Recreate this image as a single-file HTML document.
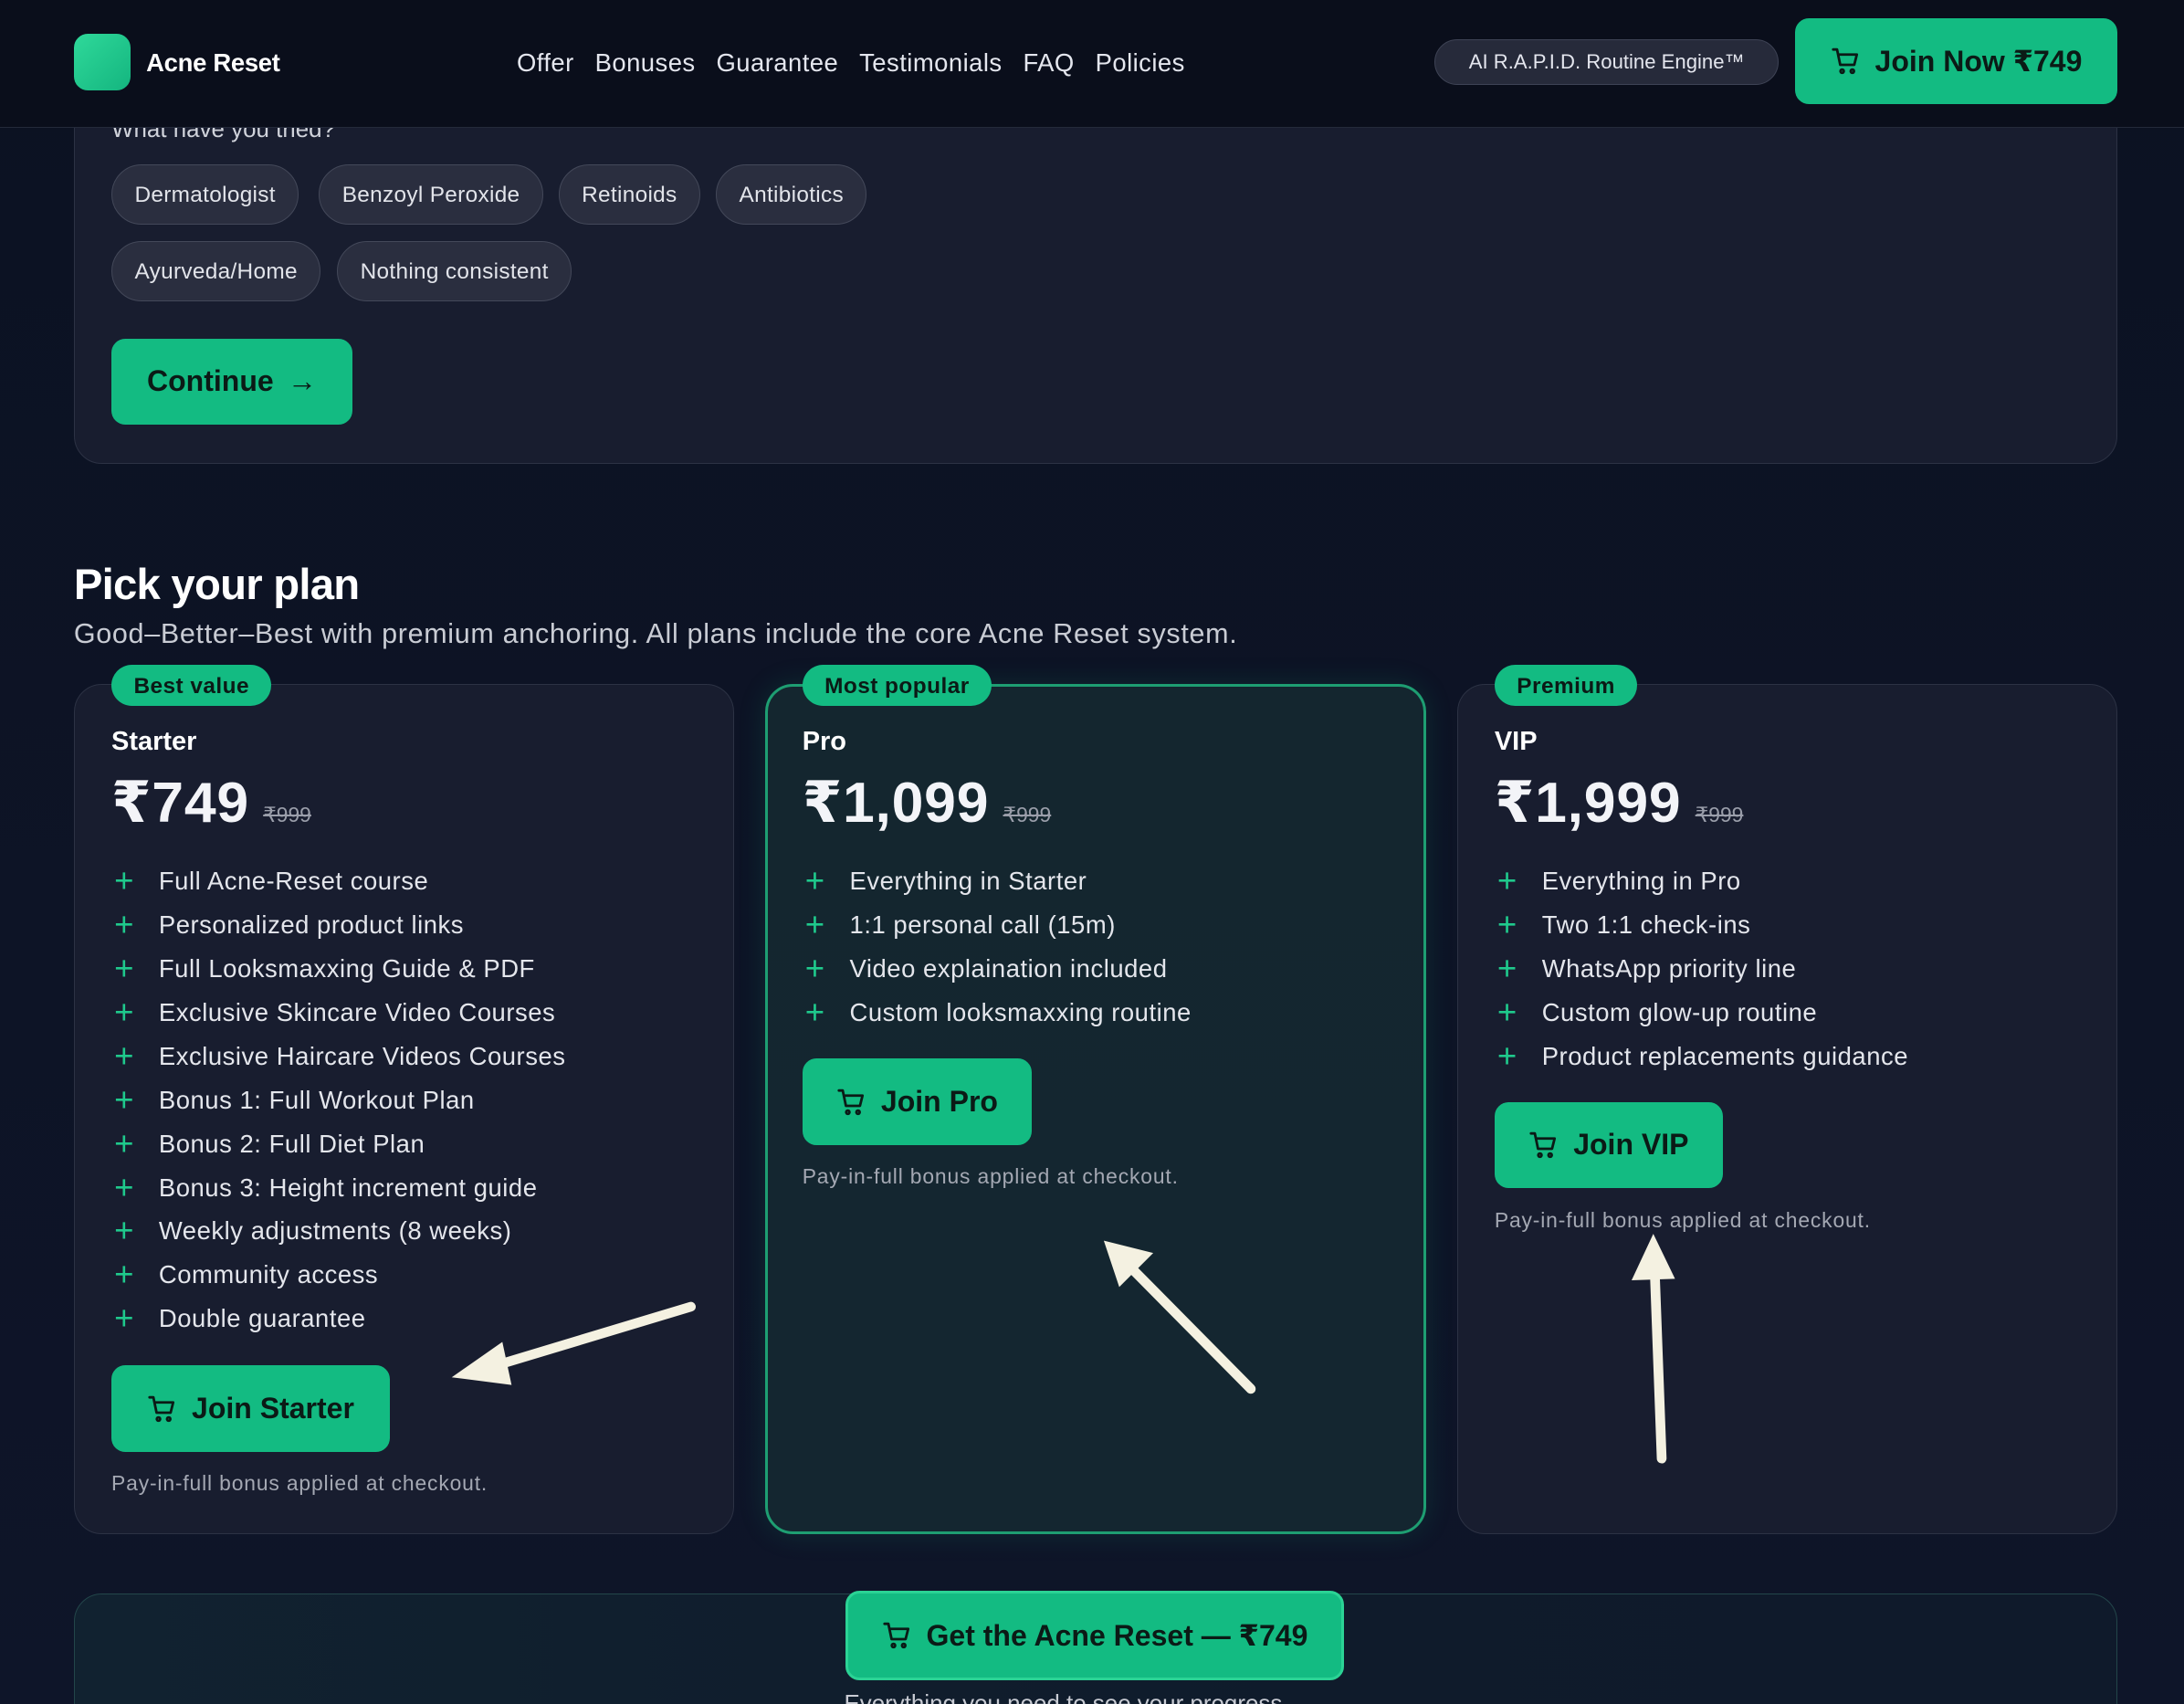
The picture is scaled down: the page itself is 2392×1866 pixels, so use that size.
<!DOCTYPE html>
<html><head><meta charset="utf-8"><style>
*{box-sizing:border-box;margin:0;padding:0}
html,body{width:2392px;height:1866px;overflow:hidden;background:#0d1426}
#r{zoom:1.52551;width:1568px;height:1223px;position:relative;font-family:"Liberation Sans","DejaVu Sans",sans-serif;color:#e8eaf0;background:linear-gradient(#0c1222,#0e1529)}
.abs{position:absolute}
.hdr{left:0;top:0;width:1568px;height:92px;background:#0a0e1b;border-bottom:1px solid #242a3a;z-index:5}
.logo{left:53px;top:24px;width:41px;height:41px;border-radius:10px;background:linear-gradient(135deg,#2fd99a,#14b57f)}
.brand{left:105px;top:35px;font-size:18px;font-weight:bold;color:#fff;letter-spacing:-.2px}
.nav{left:371px;top:35px;font-size:18px;color:#e4e6ee;letter-spacing:.3px}
.nav span{margin-right:15px}
.pill{left:1030px;top:28px;width:247px;height:33px;border-radius:17px;background:#262a3a;border:1px solid #3e4355;font-size:14.5px;text-align:center;line-height:31px;color:#e4e6ee}
.btn{background:#13bb82;color:#0b1a16;font-weight:bold;border-radius:10px;display:flex;align-items:center;justify-content:center;gap:10px}
.card{background:#181d2f;border:1px solid #2c3244;border-radius:20px}
.chip{position:absolute;height:43px;border-radius:22px;background:#2a2e3f;border:1px solid #434859;font-size:16px;line-height:43px;padding:0 16px;color:#e2e4ea;letter-spacing:.2px}
.badge{position:absolute;top:477px;height:30px;border-radius:15px;background:#13bb82;color:#0b1a16;font-weight:bold;font-size:16px;line-height:31px;padding:0 16px;letter-spacing:.3px}
.nm{position:absolute;top:522px;font-size:19px;font-weight:bold;color:#fff}
.pr{position:absolute;top:552px;font-size:41px;font-weight:900;color:#f3f4f8;letter-spacing:.5px}
.pr s{font-size:15px;font-weight:normal;color:#9a9eaa;margin-left:10px;letter-spacing:0}
ul{position:absolute;top:621px;list-style:none;font-size:18px;color:#e4e6ec;letter-spacing:.35px}
li{height:31.4px;line-height:24px;display:flex;gap:12px}
li:before{content:"+";color:#1fc98c;font-size:24px;font-weight:normal;width:20px;margin-left:2px}
.pay{position:absolute;font-size:15px;color:#a4a8b3;letter-spacing:.55px}
</style></head><body><div id="r">
<div class="abs hdr"></div>
<div class="abs logo" style="z-index:6"></div>
<div class="abs brand" style="z-index:6">Acne Reset</div>
<div class="abs nav" style="z-index:6"><span>Offer</span><span>Bonuses</span><span>Guarantee</span><span>Testimonials</span><span>FAQ</span><span>Policies</span></div>
<div class="abs pill" style="z-index:6">AI R.A.P.I.D. Routine Engine™</div>
<div class="abs btn" style="z-index:6;left:1289px;top:13px;width:231px;height:62px;font-size:21px;border-radius:10px">
<svg width="22" height="22" viewBox="0 0 24 24" fill="none" stroke="#0b1a16" stroke-width="2" stroke-linecap="round" stroke-linejoin="round"><path d="M2 3h3l2.5 12h11l2-8H6"/><circle cx="9" cy="20" r="1.3"/><circle cx="17" cy="20" r="1.3"/></svg>Join Now ₹749</div>

<div class="abs card" style="left:53px;top:40px;width:1467px;height:293px"></div>
<div class="abs" style="left:80px;top:84px;font-size:17px;color:#d0d3db">What have you tried?</div>
<div class="chip" style="left:80px;top:118px">Dermatologist</div>
<div class="chip" style="left:229px;top:118px">Benzoyl Peroxide</div>
<div class="chip" style="left:401px;top:118px">Retinoids</div>
<div class="chip" style="left:514px;top:118px">Antibiotics</div>
<div class="chip" style="left:80px;top:173px">Ayurveda/Home</div>
<div class="chip" style="left:242px;top:173px">Nothing consistent</div>
<div class="abs btn" style="left:80px;top:243px;width:173px;height:62px;font-size:21px">Continue <span style="font-weight:normal">→</span></div>

<div class="abs" style="left:53px;top:402px;font-size:31px;font-weight:bold;color:#fff;letter-spacing:-.5px">Pick your plan</div>
<div class="abs" style="left:53px;top:444px;font-size:20px;color:#c9ccd4;letter-spacing:.45px">Good–Better–Best with premium anchoring. All plans include the core Acne Reset system.</div>

<div class="abs card" style="left:53px;top:491px;width:474px;height:610px"></div>
<div class="abs card" style="left:549px;top:491px;width:475px;height:610px;background:linear-gradient(#14262f,#142630);border:2px solid #1e9e72;box-shadow:0 0 20px rgba(20,180,130,.15)"></div>
<div class="abs card" style="left:1046px;top:491px;width:474px;height:610px"></div>

<div class="badge" style="left:80px">Best value</div>
<div class="badge" style="left:576px">Most popular</div>
<div class="badge" style="left:1073px">Premium</div>
<div class="nm" style="left:80px">Starter</div>
<div class="nm" style="left:576px">Pro</div>
<div class="nm" style="left:1073px">VIP</div>
<div class="pr" style="left:80px">₹749<s>₹999</s></div>
<div class="pr" style="left:576px">₹1,099<s>₹999</s></div>
<div class="pr" style="left:1073px">₹1,999<s>₹999</s></div>
<ul style="left:80px"><li>Full Acne-Reset course</li><li>Personalized product links</li><li>Full Looksmaxxing Guide &amp; PDF</li><li>Exclusive Skincare Video Courses</li><li>Exclusive Haircare Videos Courses</li><li>Bonus 1: Full Workout Plan</li><li>Bonus 2: Full Diet Plan</li><li>Bonus 3: Height increment guide</li><li>Weekly adjustments (8 weeks)</li><li>Community access</li><li>Double guarantee</li></ul>
<ul style="left:576px"><li>Everything in Starter</li><li>1:1 personal call (15m)</li><li>Video explaination included</li><li>Custom looksmaxxing routine</li></ul>
<ul style="left:1073px"><li>Everything in Pro</li><li>Two 1:1 check-ins</li><li>WhatsApp priority line</li><li>Custom glow-up routine</li><li>Product replacements guidance</li></ul>

<div class="abs btn" style="left:80px;top:980px;width:200px;height:62px;font-size:21px"><svg width="22" height="22" viewBox="0 0 24 24" fill="none" stroke="#0b1a16" stroke-width="2" stroke-linecap="round" stroke-linejoin="round"><path d="M2 3h3l2.5 12h11l2-8H6"/><circle cx="9" cy="20" r="1.3"/><circle cx="17" cy="20" r="1.3"/></svg>Join Starter</div>
<div class="abs btn" style="left:576px;top:760px;width:165px;height:62px;font-size:21px"><svg width="22" height="22" viewBox="0 0 24 24" fill="none" stroke="#0b1a16" stroke-width="2" stroke-linecap="round" stroke-linejoin="round"><path d="M2 3h3l2.5 12h11l2-8H6"/><circle cx="9" cy="20" r="1.3"/><circle cx="17" cy="20" r="1.3"/></svg>Join Pro</div>
<div class="abs btn" style="left:1073px;top:791px;width:164px;height:62px;font-size:21px"><svg width="22" height="22" viewBox="0 0 24 24" fill="none" stroke="#0b1a16" stroke-width="2" stroke-linecap="round" stroke-linejoin="round"><path d="M2 3h3l2.5 12h11l2-8H6"/><circle cx="9" cy="20" r="1.3"/><circle cx="17" cy="20" r="1.3"/></svg>Join VIP</div>
<div class="pay" style="left:80px;top:1056px">Pay-in-full bonus applied at checkout.</div>
<div class="pay" style="left:576px;top:836px">Pay-in-full bonus applied at checkout.</div>
<div class="pay" style="left:1073px;top:867px">Pay-in-full bonus applied at checkout.</div>

<svg class="abs" style="left:0;top:0" width="1568" height="1223">
<g fill="#f4f1e1" stroke="#f4f1e1" stroke-width="7" stroke-linecap="round">
<line x1="496" y1="938" x2="350" y2="982"/><polygon points="327,988 360,965 366,993" stroke-width="2"/>
<line x1="898" y1="997" x2="812" y2="910"/><polygon points="794,892 826,900 804,922" stroke-width="2"/>
<line x1="1193" y1="1047" x2="1188" y2="912"/><polygon points="1187,888 1201,917 1173,918" stroke-width="2"/>
</g></svg>

<div class="abs" style="left:53px;top:1144px;width:1467px;height:120px;border:1px solid #23464a;border-radius:20px;background:linear-gradient(90deg,#112230,#0f1b2b 60%,#0f1a2b)"></div>
<div class="abs btn" style="left:607px;top:1142px;width:358px;height:64px;font-size:21px;border:2px solid #2bd395"><svg width="22" height="22" viewBox="0 0 24 24" fill="none" stroke="#0b1a16" stroke-width="2" stroke-linecap="round" stroke-linejoin="round"><path d="M2 3h3l2.5 12h11l2-8H6"/><circle cx="9" cy="20" r="1.3"/><circle cx="17" cy="20" r="1.3"/></svg>Get the Acne Reset — ₹749</div>
<div class="abs" style="left:606px;top:1214px;font-size:17px;color:#c9ccd4">Everything you need to see your progress</div>
</div></body></html>
